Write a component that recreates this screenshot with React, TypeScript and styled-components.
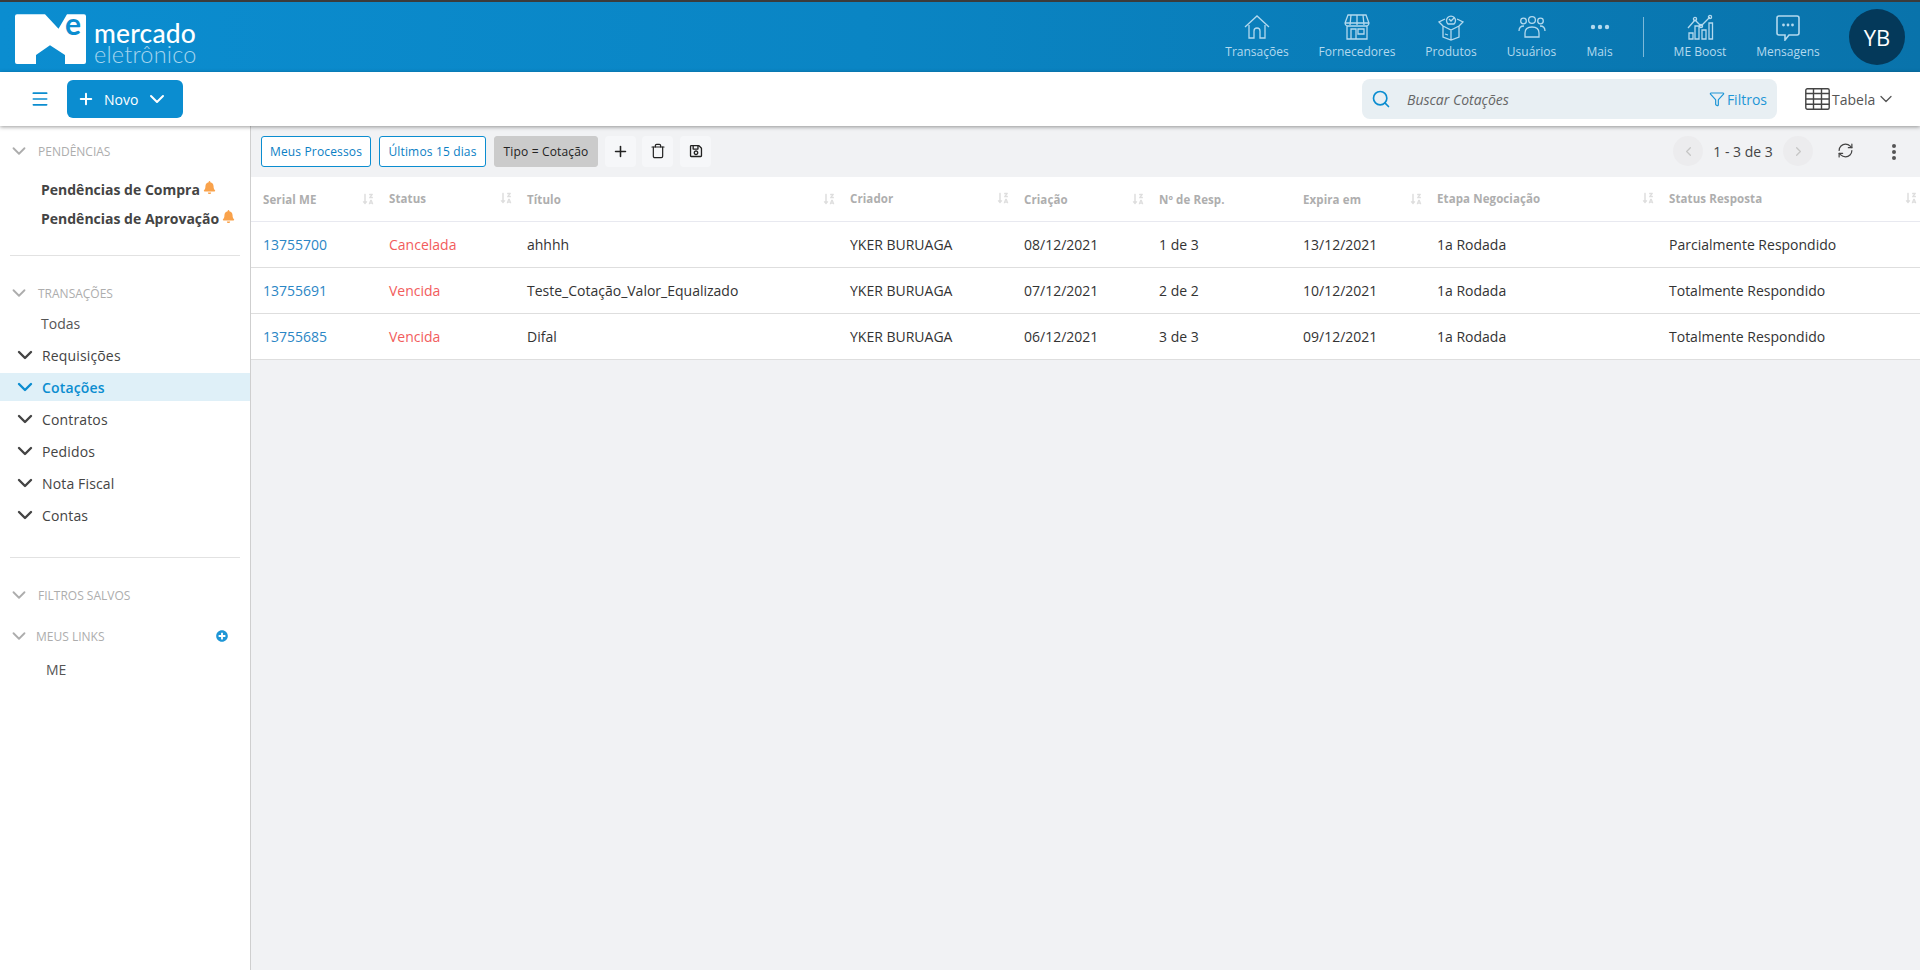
import React from "react";
import styled, { createGlobalStyle } from "styled-components";
import { ChevronDown, ChevronLeft, ChevronRight, Funnel, Menu, Plus, RefreshCw, Search, Trash } from "lucide-react";
import { FaBell, FaPlusCircle, FaRegSave, FaSortAlphaDownAlt } from "react-icons/fa";

const Global = createGlobalStyle`
  html, body { margin: 0; padding: 0; width: 1920px; height: 970px; overflow: hidden; background: #fff; }
  * { box-sizing: border-box; }
  body { font-family: "Open Sans", "Liberation Sans", sans-serif; }
`;
const Page = styled.div`width: 1920px; height: 970px; display: flex; flex-direction: column; overflow: hidden;`;
const TopStrip = styled.div`height: 2px; background: #3b3b3b; flex: none;`;
const Header = styled.header`
  height: 70px; flex: none; display: flex; align-items: center; position: relative;
  background: linear-gradient(90deg, #0b8dd0 0%, #0a85c4 45%, #0973ab 100%);
`;
const LogoBox = styled.div`position: absolute; left: 15px; top: 10px; display: flex;`;
const LogoE = styled.span`
  position: absolute; left: 50px; top: -4px; font-family: Lato, sans-serif; font-weight: 700; font-size: 30px; line-height: 30px; color: #0b8dd0;
`;
const LogoWords = styled.div`margin-left: 7px; margin-top: 10px; font-family: Lato, sans-serif; color: #fff;`;
const LogoTop = styled.div`font-size: 26.4px; font-weight: 500; line-height: 22px; letter-spacing: .2px;`;
const LogoBottom = styled.div`font-size: 23.5px; font-weight: 300; line-height: 20px; color: #a5d5ee; letter-spacing: .2px;`;
const Nav = styled.nav`position: absolute; left: 1207px; top: 0; height: 70px; display: flex; align-items: flex-start;`;
const NavItem = styled.div<{ $w: number }>`
  width: ${p => p.$w}px; height: 70px; display: flex; flex-direction: column; align-items: center; padding-top: 11px;
  color: #b3d9ee; font-size: 12px; white-space: nowrap;
  svg { width: 28px; height: 28px; display: block; fill: none; stroke: #b3d9ee; stroke-width: 1.3; }
  span { margin-top: 2px; line-height: 18px; }
`;
const NavRule = styled.div`width: 1px; height: 40px; background: #7db9d9; margin: 15px 0 0 12px;`;
const Avatar = styled.div`
  width: 56px; height: 56px; border-radius: 50%; background: #04395a; color: #fff; margin: 7px 0 0 29px;
  display: flex; align-items: center; justify-content: center; font-size: 22px; font-family: "Open Sans", sans-serif; flex: none;
`;
const Toolbar = styled.div`
  height: 54px; flex: none; background: #fff; display: flex; align-items: center; position: relative; z-index: 2;
  box-shadow: 0 1px 4px rgba(0,0,0,.4);
`;
const MenuBtn = styled.div`width: 67px; padding-left: 30px; color: #0b8dd0; display: flex; align-items: center;`;
const NewBtn = styled.div`
  width: 116px; height: 38px; background: #0b8dd0; border-radius: 6px; color: #fff; font-size: 14px; font-weight: 500;
  display: flex; align-items: center; padding-left: 10px;
  span { margin: 0 7px 0 9px; }
`;
const SearchBox = styled.div`
  position: absolute; left: 1362px; top: 7px; width: 415px; height: 40px; background: #e8eff3; border-radius: 8px;
  display: flex; align-items: center; padding-left: 9px; color: #0b8dd0;
`;
const SearchText = styled.span`font-style: italic; font-size: 14px; color: #666; margin-left: 16px; flex: 1;`;
const FilterLabel = styled.span`font-size: 14px; color: #1e96d6; margin: 0 10px 0 2px;`;
const ViewSwitch = styled.div`
  position: absolute; left: 1805px; top: 7px; height: 40px; display: flex; align-items: center; font-size: 14px; color: #555;
  svg.tb { margin-right: 2px; }
  span { margin-right: 1px; }
`;
const Body = styled.div`flex: 1; display: flex; min-height: 0;`;
const Sidebar = styled.aside`width: 251px; flex: none; background: #fff; border-right: 1px solid #cfcfcf; padding-top: 11px; position: relative;`;
const SecHead = styled.div<{ $pl?: number; $mt?: number }>`
  height: 28px; display: flex; align-items: center; margin-top: ${p => p.$mt ?? 0}px; padding-left: 8px; color: #adadad; font-size: 12px; position: relative;
  span { margin-left: ${p => p.$pl ?? 8}px; }
`;
const BoldList = styled.div`margin-top: 10px;`;
const BoldItem = styled.div`
  height: 29px; padding-left: 41px; display: flex; align-items: center; font-size: 14px; font-weight: 700; color: #444;
  svg { color: #f9a24b; margin: -5px 0 0 3px; }
`;
const Rule = styled.div<{ $mt: number }>`height: 1px; background: #e2e2e2; margin: ${p => p.$mt}px 10px 0;`;
const Leaf = styled.div<{ $pl?: number; $h?: number }>`height: ${p => p.$h ?? 32}px; padding-left: ${p => p.$pl ?? 41}px; display: flex; align-items: center; font-size: 14px; color: #555;`;
const TreeItem = styled.div<{ $active?: boolean }>`
  height: 32px; display: flex; align-items: center; padding-left: 13px; font-size: 14px; font-weight: ${p => p.$active ? 600 : 500};
  color: ${p => p.$active ? "#0b8dd0" : "#444"}; position: relative; letter-spacing: .15px;
  span { margin-left: 5px; position: relative; }
  svg { position: relative; }
  ${p => p.$active ? `&::before { content: ""; position: absolute; left: 0; right: 0; top: 2px; height: 28px; background: #dff0f8; }` : ""}
`;
const AddLink = styled.div`position: absolute; left: 216px; top: 8px; color: #1e96d6; display: flex;`;
const Main = styled.main`flex: 1; background: #f1f2f4; min-width: 0;`;
const ChipBar = styled.div`height: 51px; display: flex; align-items: center; padding-left: 10px; position: relative; padding-bottom: 1px;`;
const Chip = styled.div<{ $w: number; $mr: number }>`
  width: ${p => p.$w}px; height: 31px; margin-right: ${p => p.$mr}px; border: 1px solid #0b8dd0; border-radius: 3px; background: #fff;
  color: #0b80c4; font-size: 12px; font-weight: 500; letter-spacing: .15px; display: flex; align-items: center; justify-content: center; white-space: nowrap;
`;
const GreyChip = styled(Chip)`background: #cbcbcb; border-color: #cbcbcb; color: #222;`;
const IconBtn = styled.div<{ $mr: number }>`
  width: 31px; height: 31px; margin-right: ${p => p.$mr}px; background: #f6f7f9; border-radius: 4px; color: #222;
  display: flex; align-items: center; justify-content: center;
`;
const Pager = styled.div`position: absolute; left: 1422px; top: 10px; height: 30px; display: flex; align-items: center; font-size: 14px; color: #444;`;
const PageArrow = styled.div`width: 30px; height: 30px; border-radius: 50%; background: #ececee; color: #c6c6c6; display: flex; align-items: center; justify-content: center;`;
const PageText = styled.span`width: 80px; text-align: center;`;
const ToolIcon = styled.div<{ $l: number }>`position: absolute; left: ${p => p.$l}px; top: 16px; display: flex; color: #444;`;
const Kebab = styled.div`
  position: absolute; left: 1641px; top: 18px; width: 4px; height: 16px; display: flex; flex-direction: column; justify-content: space-between;
  i { display: block; width: 4px; height: 4px; background: #555; border-radius: 50%; }
`;
const Table = styled.div`background: #fff; --cols: 126px 138px 323px 174px 135px 144px 134px 232px 263px;`;
const HeadRow = styled.div`display: grid; grid-template-columns: var(--cols); height: 45px; border-bottom: 1px solid #e8e9f0;`;
const HeadCell = styled.div<{ $up?: boolean }>`
  display: flex; align-items: center; justify-content: space-between; padding: 0 3px ${p => p.$up ? 2 : 0}px 12px; font-size: 11.5px; font-weight: 700; color: #aeaeae; white-space: nowrap; letter-spacing: .1px;
  svg { color: #dedede; }
`;
const Row = styled.div`display: grid; grid-template-columns: var(--cols); height: 46px; border-bottom: 1px solid #dedede;`;
const Cell = styled.div<{ $c?: string }>`display: flex; align-items: center; padding-left: 12px; font-size: 14px; color: ${p => p.$c ?? "#333"}; white-space: nowrap;`;

const Logo = () => (
  <svg width="72" height="52" viewBox="0 0 72 52">
    <path d="M2 2.3H30L43.5 16.7 52 2.3H69Q71 2.3 71 4.3V50Q71 52 69 52H50V43L35 33.3 21 43V52H2Q0 52 0 50V4.3Q0 2.3 2 2.3Z" fill="#fff" />
  </svg>
);
const IcoHome = () => <svg viewBox="0 0 28 28"><path d="M2 14 14 3l12 11M6 12v13h5v-7q0-3 3-3t3 3v7h5V12" /></svg>;
const IcoStore = () => <svg viewBox="0 0 28 28"><path d="M5 2h18l3 8q0 2-2 3H4Q2 12 2 10zM2 10h24M8 2 7 12M14 2v10M20 2l1 10M4 13v13h20V13M8 26V16h5v10M15 16h6v5h-6z" /></svg>;
const IcoBox = () => <svg viewBox="0 0 28 28"><path d="M6 13v11l8 3 8-3V13M14 17v10M6 13 2 9l6-3M22 13l4-4-6-3M6 13l8 4 8-4M2 9l4 4M11 11a4.5 4.5 0 1 1 6 0zM12 6l2 2 3-3M8 21l3 1" /></svg>;
const IcoUsers = () => <svg viewBox="0 0 28 28"><circle cx="14" cy="7" r="3.4" /><circle cx="5.5" cy="8" r="2.8" /><circle cx="22.5" cy="8" r="2.8" /><path d="M7 24v-4q0-6 7-6t7 6v4zM1 18q0-5 5-5M27 18q0-5-5-5" /></svg>;
const IcoDots = () => <svg viewBox="0 0 28 28"><g fill="#b3d9ee" stroke="none"><circle cx="7" cy="14" r="2.2" /><circle cx="14" cy="14" r="2.2" /><circle cx="21" cy="14" r="2.2" /></g></svg>;
const IcoBoost = () => <svg viewBox="0 0 28 28"><path d="M2 15 9 7l6 6 9-9" /><circle cx="9" cy="6" r="1.6" /><circle cx="15" cy="13" r="1.6" /><circle cx="24" cy="4" r="1.6" /><path d="M3 20h4v6H3zM9 13h4v13H9zM16 17h4v9h-4zM23 10h3.5v16H23z" /></svg>;
const IcoChat = () => <svg viewBox="0 0 28 28"><path d="M5 3h18q2 0 2 2v15q0 2-2 2h-8l-4 5v-5H5q-2 0-2-2V5q0-2 2-2z" strokeWidth="1.6" /><g fill="#b3d9ee" stroke="none"><circle cx="9.5" cy="12" r="1.4" /><circle cx="14" cy="12" r="1.4" /><circle cx="18.5" cy="12" r="1.4" /></g></svg>;
const IcoTable = () => (
  <svg className="tb" width="25" height="22" viewBox="0 0 25 22" fill="none" stroke="#444" strokeWidth="1.4">
    <rect x=".8" y=".8" width="23.4" height="20.4" rx="1.5" />
    <path d="M.8 5.5h23.4M.8 11h23.4M.8 16.2h23.4M8.5 1v20M16.5 1v20" />
  </svg>
);

const navItems: [number, React.ReactNode, string][] = [
  [100, <IcoHome />, "Transações"],
  [100, <IcoStore />, "Fornecedores"],
  [88, <IcoBox />, "Produtos"],
  [73, <IcoUsers />, "Usuários"],
  [63, <IcoDots />, "Mais"],
];
const heads: [string, boolean, boolean][] = [
  ["Serial ME", true, false], ["Status", true, true], ["Título", true, false], ["Criador", true, true], ["Criação", true, false],
  ["Nº de Resp.", false, false], ["Expira em", true, false], ["Etapa Negociação", true, true], ["Status Resposta", true, true],
];
const rows = [
  ["13755700", "Cancelada", "ahhhh", "YKER BURUAGA", "08/12/2021", "1 de 3", "13/12/2021", "1a Rodada", "Parcialmente Respondido"],
  ["13755691", "Vencida", "Teste_Cotação_Valor_Equalizado", "YKER BURUAGA", "07/12/2021", "2 de 2", "10/12/2021", "1a Rodada", "Totalmente Respondido"],
  ["13755685", "Vencida", "Difal", "YKER BURUAGA", "06/12/2021", "3 de 3", "09/12/2021", "1a Rodada", "Totalmente Respondido"],
];
const tree = ["Requisições", "Cotações", "Contratos", "Pedidos", "Nota Fiscal", "Contas"];
const cellColor = (i: number) => (i === 0 ? "#2b86c5" : i === 1 ? "#f25c5c" : undefined);

export default function App() {
  return (
    <Page>
      <Global />
      <TopStrip />
      <Header>
        <LogoBox>
          <Logo />
          <LogoE>e</LogoE>
          <LogoWords>
            <LogoTop>mercado</LogoTop>
            <LogoBottom>eletrônico</LogoBottom>
          </LogoWords>
        </LogoBox>
        <Nav>
          {navItems.map(([w, icon, label]) => (
            <NavItem key={label} $w={w}>{icon}<span>{label}</span></NavItem>
          ))}
          <NavRule />
          <NavItem $w={112}><IcoBoost /><span>ME Boost</span></NavItem>
          <NavItem $w={64}><IcoChat /><span>Mensagens</span></NavItem>
          <Avatar>YB</Avatar>
        </Nav>
      </Header>
      <Toolbar>
        <MenuBtn><Menu size={20} strokeWidth={2} /></MenuBtn>
        <NewBtn><Plus size={18} strokeWidth={2.6} /><span>Novo</span><ChevronDown size={24} strokeWidth={2} /></NewBtn>
        <SearchBox>
          <Search size={20} strokeWidth={2} />
          <SearchText>Buscar Cotações</SearchText>
          <Funnel size={16} color="#1e96d6" strokeWidth={1.8} />
          <FilterLabel>Filtros</FilterLabel>
        </SearchBox>
        <ViewSwitch><IcoTable /><span>Tabela</span><ChevronDown size={20} strokeWidth={1.5} /></ViewSwitch>
      </Toolbar>
      <Body>
        <Sidebar>
          <SecHead><ChevronDown size={22} strokeWidth={2} /><span>PENDÊNCIAS</span></SecHead>
          <BoldList>
            <BoldItem>Pendências de Compra<FaBell size={13} /></BoldItem>
            <BoldItem>Pendências de Aprovação<FaBell size={13} /></BoldItem>
          </BoldList>
          <Rule $mt={22} />
          <SecHead $mt={23}><ChevronDown size={22} strokeWidth={2} /><span>TRANSAÇÕES</span></SecHead>
          <Leaf>Todas</Leaf>
          {tree.map(t => (
            <TreeItem key={t} $active={t === "Cotações"}><ChevronDown size={24} strokeWidth={2.4} /><span>{t}</span></TreeItem>
          ))}
          <Rule $mt={26} />
          <SecHead $mt={23}><ChevronDown size={22} strokeWidth={2} /><span>FILTROS SALVOS</span></SecHead>
          <SecHead $pl={6} $mt={13}>
            <ChevronDown size={22} strokeWidth={2} /><span>MEUS LINKS</span>
            <AddLink><FaPlusCircle size={12} /></AddLink>
          </SecHead>
          <Leaf $pl={46} $h={38}>ME</Leaf>
        </Sidebar>
        <Main>
          <ChipBar>
            <Chip $w={110} $mr={8}>Meus Processos</Chip>
            <Chip $w={107} $mr={8}>Últimos 15 dias</Chip>
            <GreyChip $w={104} $mr={7}>Tipo = Cotação</GreyChip>
            <IconBtn $mr={6}><Plus size={17} strokeWidth={2.2} /></IconBtn>
            <IconBtn $mr={7}><Trash size={16} strokeWidth={1.8} /></IconBtn>
            <IconBtn $mr={0}><FaRegSave size={14} /></IconBtn>
            <Pager>
              <PageArrow><ChevronLeft size={15} /></PageArrow>
              <PageText>1 - 3 de 3</PageText>
              <PageArrow><ChevronRight size={15} /></PageArrow>
            </Pager>
            <ToolIcon $l={1586}><RefreshCw size={17} strokeWidth={1.7} /></ToolIcon>
            <Kebab><i /><i /><i /></Kebab>
          </ChipBar>
          <Table>
            <HeadRow>
              {heads.map(([h, sort, up]) => (
                <HeadCell key={h} $up={up}>{h}{sort && <FaSortAlphaDownAlt size={12} />}</HeadCell>
              ))}
            </HeadRow>
            {rows.map(r => (
              <Row key={r[0]}>
                {r.map((c, i) => <Cell key={i} $c={cellColor(i)}>{c}</Cell>)}
              </Row>
            ))}
          </Table>
        </Main>
      </Body>
    </Page>
  );
}
